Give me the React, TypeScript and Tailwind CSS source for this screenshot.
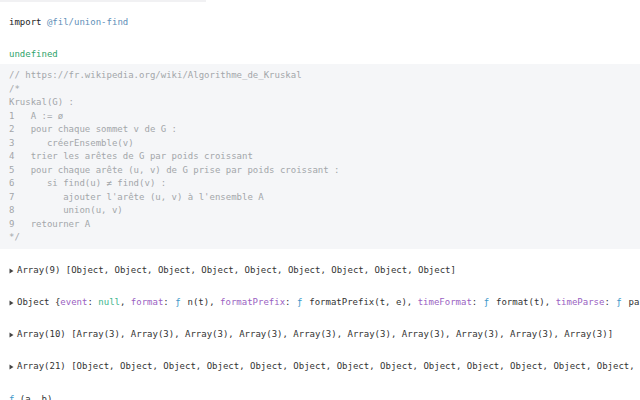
const mono = "font-['DejaVu_Sans_Mono',monospace]";

function Caret() {
  return (
    <svg width="5" height="6" viewBox="0 0 5 6" className="shrink-0 mr-[3px]">
      <path d="M0.5 0.5 L4.5 3 L0.5 5.5 Z" fill="#444" />
    </svg>
  );
}

const kruskal = [
  "// https://fr.wikipedia.org/wiki/Algorithme_de_Kruskal",
  "/*",
  "Kruskal(G) :",
  "1   A := ø",
  "2   pour chaque sommet v de G :",
  "3      créerEnsemble(v)",
  "4   trier les arêtes de G par poids croissant",
  "5   pour chaque arête (u, v) de G prise par poids croissant :",
  "6      si find(u) ≠ find(v) :",
  "7         ajouter l'arête (u, v) à l'ensemble A",
  "8         union(u, v)",
  "9   retourner A",
  "*/",
];

function Key({ k }: { k: string }) {
  return <span className="text-[#9a5fc2]">{k}</span>;
}

function Fn() {
  return <span className="text-[#3d97c9] ml-[1px] mr-[1.5px]">ƒ</span>;
}

export default function App() {
  const objs9 = Array(9).fill("Object").join(", ");
  const arr10 = Array(10).fill("Array(3)").join(", ");
  const objs21 = Array(21).fill("Object").join(", ");

  return (
    <div className={`w-[640px] h-[400px] overflow-hidden bg-white text-[9px] text-[#333] ${mono}`}>
      <div className="h-[2px] w-[206px] bg-[#f1f1f3]" />

      <div className="mt-[14px] h-[14px] px-[9px] flex items-center whitespace-pre">
        <span className="text-[#222]">import </span>
        <span className="text-[#5f8fb8]">@fil/union-find</span>
      </div>

      <div className="mt-[18px] h-[14px] px-[9px] flex items-center text-[#2fa36b]">undefined</div>

      <div className="mt-[2px] bg-[#f5f6f8] px-[9px] pt-[5px] pb-[4px] leading-[13.5px] text-[#a3a6aa] whitespace-pre">
        {kruskal.map((l, i) => (
          <div key={i}>{l}</div>
        ))}
      </div>

      <div className="pl-[9px] whitespace-nowrap overflow-hidden">
        <div className="mt-[15px] h-[14px] flex items-center">
          <Caret />
          <span>Array(9) [{objs9}]</span>
        </div>

        <div className="mt-[18px] h-[14px] flex items-center">
          <Caret />
          <span className="whitespace-pre">
            Object {"{"}
            <Key k="event" />: <span className="text-[#3cb58c]">null</span>, <Key k="format" />: <Fn /> n(t),{" "}
            <Key k="formatPrefix" />: <Fn /> formatPrefix(t, e), <Key k="timeFormat" />: <Fn /> format(t),{" "}
            <Key k="timeParse" />: <Fn /> parse(t), <Key k="utcFormat" />: <Fn /> utcFormat(t){"}"}
          </span>
        </div>

        <div className="mt-[18px] h-[14px] flex items-center">
          <Caret />
          <span>Array(10) [{arr10}]</span>
        </div>

        <div className="mt-[18px] h-[14px] flex items-center">
          <Caret />
          <span>Array(21) [{objs21}, …]</span>
        </div>

        <div className="mt-[19px] h-[14px] flex items-center whitespace-pre">
          <span className="text-[#3d97c9]">ƒ</span> (a, b)
        </div>
      </div>
    </div>
  );
}
